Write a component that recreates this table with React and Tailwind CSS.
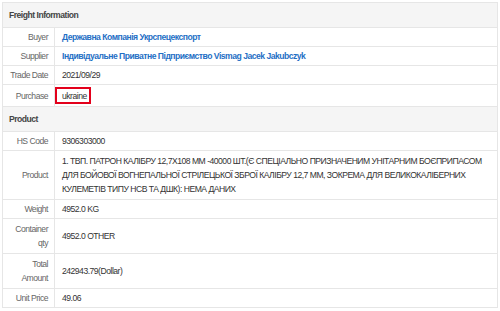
import React from 'react'

const font = { fontFamily: '"Liberation Sans", Arial, sans-serif' }

function Section({ title }) {
  return (
    <tr>
      <td colSpan={2} className="h-[25px] bg-[#f5f5f5] border border-[#e6e6e6] px-[6px] text-[8.6px] font-bold tracking-[-0.5px] text-[#444]">
        {title}
      </td>
    </tr>
  )
}

function Row({ label, children, tall }) {
  const pad = tall ? 'py-[3px]' : 'py-[2px]'
  return (
    <tr>
      <td className={`border border-[#e6e6e6] pr-[6px] pl-[2px] ${pad} text-right align-middle leading-[14px] text-[#666]`}>
        {label}
      </td>
      <td className={`border border-[#e6e6e6] pl-[7px] pr-[6px] ${pad} align-middle leading-[14px] text-[#333]`}>
        {children}
      </td>
    </tr>
  )
}

export default function App() {
  return (
    <div className="bg-white w-[500px] h-[311px] pt-[2px] pl-[2px]" style={font}>
      <table className="w-[496px] border-collapse text-[8.6px] tracking-[-0.5px] table-fixed">
        <colgroup>
          <col className="w-[52px]" />
          <col />
        </colgroup>
        <tbody>
          <Section title="Freight Information" />
          <Row label="Buyer">
            <span className="text-[#1f6fc5] font-bold">Державна Компанія Укрспецекспорт</span>
          </Row>
          <Row label="Supplier">
            <span className="text-[#1f6fc5] font-bold">Індивідуальне Приватне Підприємство Vismag Jacek Jakubczyk</span>
          </Row>
          <Row label="Trade Date">2021/09/29</Row>
          <Row label="Purchase">
            <span className="inline-block -ml-[7px] border-2 border-[#e3001b] pl-[5px] pr-[2px] py-[0.5px] leading-[12px]">ukraine</span>
          </Row>
          <Section title="Product" />
          <Row label="HS Code">9306303000</Row>
          <Row label="Product" tall>
            1. ТВП. ПАТРОН КАЛІБРУ 12,7Х108 ММ -40000 ШТ.(Є СПЕЦІАЛЬНО ПРИЗНАЧЕНИМ УНІТАРНИМ БОЄПРИПАСОМ ДЛЯ БОЙОВОЇ ВОГНЕПАЛЬНОЇ СТРІЛЕЦЬКОЇ ЗБРОЇ КАЛІБРУ 12,7 ММ, ЗОКРЕМА ДЛЯ ВЕЛИКОКАЛІБЕРНИХ КУЛЕМЕТІВ ТИПУ НСВ ТА ДШК): НЕМА ДАНИХ
          </Row>
          <Row label="Weight">4952.0 KG</Row>
          <Row label={<>Container<br />qty</>} tall>4952.0 OTHER</Row>
          <Row label={<>Total<br />Amount</>} tall>242943.79(Dollar)</Row>
          <Row label="Unit Price">49.06</Row>
        </tbody>
      </table>
    </div>
  )
}
